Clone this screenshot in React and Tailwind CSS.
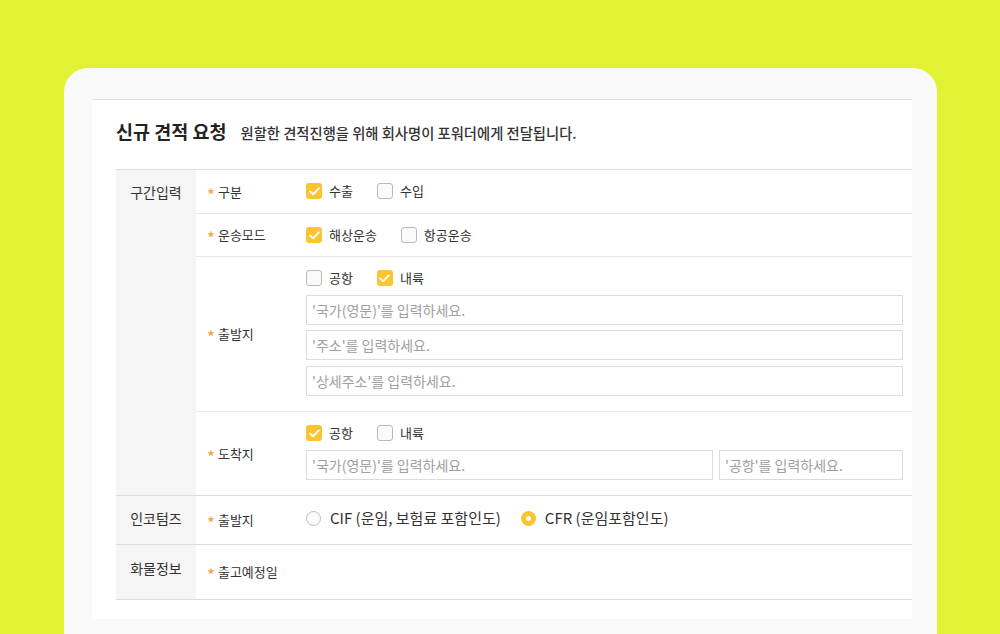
import { useState } from 'react'

const font = { fontFamily: '"Noto Sans CJK KR", "Noto Sans", sans-serif' }

function Check({ on, label }) {
  return (
    <label className="flex items-center gap-[7px] text-[13px] text-[#333]">
      {on ? (
        <span className="w-4 h-4 rounded-[3px] bg-[#fcc52f] flex items-center justify-center">
          <svg width="11" height="9" viewBox="0 0 11 9" fill="none">
            <path d="M1.2 4.6 L4.1 7.3 L9.8 1.4" stroke="white" strokeWidth="1.9" strokeLinecap="round" strokeLinejoin="round" />
          </svg>
        </span>
      ) : (
        <span className="w-4 h-4 rounded-[3px] border border-[#b9b9b9] bg-[#fafafa]" />
      )}
      <span>{label}</span>
    </label>
  )
}

function Radio({ on, label }) {
  return (
    <label className="flex items-center gap-[9px] text-[15px] text-[#333]">
      {on ? (
        <span className="w-[15px] h-[15px] rounded-full bg-[#fcc52f] flex items-center justify-center">
          <span className="w-[5px] h-[5px] rounded-full bg-white" />
        </span>
      ) : (
        <span className="w-[15px] h-[15px] rounded-full border border-[#bdbdbd] bg-[#fafafa]" />
      )}
      <span>{label}</span>
    </label>
  )
}

function Field({ placeholder, className = '' }) {
  return (
    <input
      placeholder={placeholder}
      className={`h-[30px] border border-[#dcdcdc] px-[5px] text-[14px] text-[#333] placeholder:text-[#a0a0a0] outline-none ${className}`}
      style={font}
    />
  )
}

function Label({ children }) {
  return (
    <div className="w-[110px] shrink-0 pl-[11px] flex items-center gap-[3px] text-[13px] text-[#333]">
      <span className="text-[#f5a03a] text-[17px] leading-none mt-[5px]">*</span>
      <span>{children}</span>
    </div>
  )
}

export default function App() {
  const [route] = useState({ export: true, sea: true })

  return (
    <div className="w-full h-[634px] bg-[#e1f234] overflow-hidden pt-[68px] pl-[64px] pr-[63px]" style={font}>
      <div className="h-full rounded-t-[24px] bg-[#f9f9f9] pl-[28px] pr-[25px] pt-[31px]">
        <div className="bg-white border-t border-[#dedede] h-[520px] pl-[24px]">
          {/* Title */}
          <div className="h-[69px] flex items-center gap-[14px] pb-[5px]">
            <h1 className="text-[18.5px] font-bold text-[#222]">신규 견적 요청</h1>
            <p className="text-[14.3px] font-medium text-[#333] mt-[1px]">원할한 견적진행을 위해 회사명이 포워더에게 전달됩니다.</p>
          </div>

          {/* Table */}
          <div className="border-t border-[#dedede]">
            {/* 구간입력 */}
            <div className="flex border-b border-[#dedede]">
              <div className="w-[80px] shrink-0 bg-[#f5f5f5] text-center text-[14px] text-[#333] pt-[12px]">구간입력</div>
              <div className="flex-1">
                <div className="flex h-[44px] border-b border-[#e6e6e6]">
                  <Label>구분</Label>
                  <div className="flex items-center gap-[24px] pb-[1px]">
                    <Check on={route.export} label="수출" />
                    <Check on={false} label="수입" />
                  </div>
                </div>
                <div className="flex h-[43px] border-b border-[#e6e6e6]">
                  <Label>운송모드</Label>
                  <div className="flex items-center gap-[24px]">
                    <Check on={route.sea} label="해상운송" />
                    <Check on={false} label="항공운송" />
                  </div>
                </div>
                <div className="flex border-b border-[#e6e6e6]">
                  <Label>출발지</Label>
                  <div className="flex-1 pr-[9px] pt-[11px] pb-[15px] flex flex-col">
                    <div className="flex items-center gap-[24px] h-[20px]">
                      <Check on={false} label="공항" />
                      <Check on={true} label="내륙" />
                    </div>
                    <Field className="mt-[7px]" placeholder="'국가(영문)'를 입력하세요." />
                    <Field className="mt-[5px]" placeholder="'주소'를 입력하세요." />
                    <Field className="mt-[6px]" placeholder="'상세주소'를 입력하세요." />
                  </div>
                </div>
                <div className="flex">
                  <Label>도착지</Label>
                  <div className="flex-1 pr-[9px] pt-[11px] pb-[15px] flex flex-col">
                    <div className="flex items-center gap-[24px] h-[20px]">
                      <Check on={true} label="공항" />
                      <Check on={false} label="내륙" />
                    </div>
                    <div className="flex gap-[6px] mt-[7px]">
                      <Field className="flex-1" placeholder="'국가(영문)'를 입력하세요." />
                      <Field className="w-[184px]" placeholder="'공항'를 입력하세요." />
                    </div>
                  </div>
                </div>
              </div>
            </div>

            {/* 인코텀즈 */}
            <div className="flex h-[49px] border-b border-[#dedede]">
              <div className="w-[80px] shrink-0 bg-[#f5f5f5] text-center text-[14px] text-[#333] pt-[12px]">인코텀즈</div>
              <Label>출발지</Label>
              <div className="flex items-center gap-[20px] pb-[4px]">
                <Radio on={false} label="CIF (운임, 보험료 포함인도)" />
                <Radio on={true} label="CFR (운임포함인도)" />
              </div>
            </div>

            {/* 화물정보 */}
            <div className="flex h-[55px] border-b border-[#dedede]">
              <div className="w-[80px] shrink-0 bg-[#f5f5f5] text-center text-[14px] text-[#333] pt-[13px]">화물정보</div>
              <Label>출고예정일</Label>
            </div>
          </div>
        </div>
      </div>
    </div>
  )
}
